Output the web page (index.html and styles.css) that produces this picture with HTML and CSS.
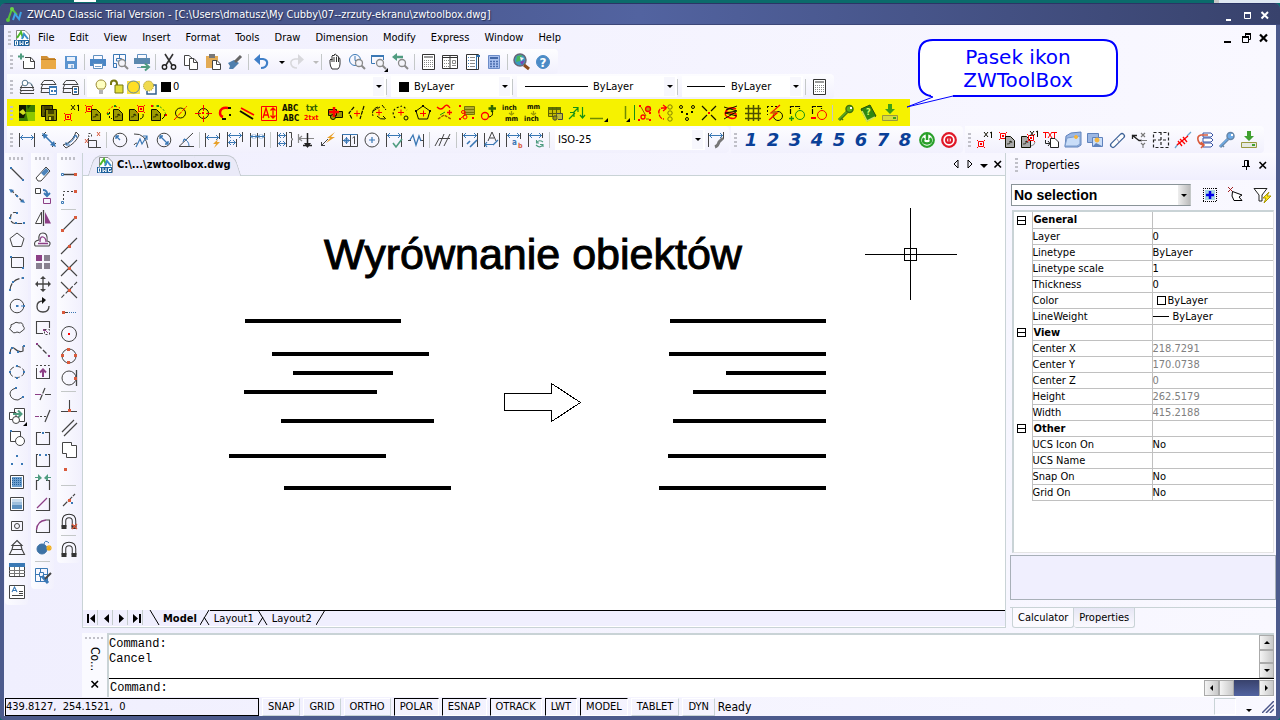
FILE: index.html
```html
<!DOCTYPE html>
<html lang="en">
<head>
<meta charset="utf-8">
<title>ZWCAD Classic</title>
<link rel="stylesheet" href="styles.css">
</head>
<body>
<div class="desktop"><span class="desktop-tab"></span><span class="desktop-edge"></span></div>
<div class="window">
  <header class="titlebar">
    <svg class="logo" viewBox="0 0 18 18" aria-hidden="true"><path d="M3 14L7 3M7 3L12 9" stroke="#58c43c" stroke-width="2" fill="none"/><circle cx="7" cy="3" r="2" fill="#6ad24a"/><circle cx="3" cy="14" r="2" fill="#58c43c"/><path d="M8 14L10 8L14 13L16 6" stroke="#3fa3e8" stroke-width="2" fill="none"/></svg>
    <h1 class="title">ZWCAD Classic Trial Version - [C:\Users\dmatusz\My Cubby\07--zrzuty-ekranu\zwtoolbox.dwg]</h1>
    <div class="tools light" data-tools="wmin wmax wclose"></div>
  </header>

  <nav class="menubar">
    <span class="grip"></span>
    <svg class="doc-icon" viewBox="0 0 16 16" aria-hidden="true"><use href="#dwg"/></svg>
    <button>File</button><button>Edit</button><button>View</button><button>Insert</button><button>Format</button><button>Tools</button><button>Draw</button><button>Dimension</button><button>Modify</button><button>Express</button><button>Window</button><button>Help</button>
    <div class="tools mdi" data-tools="mmin mrest mclose"></div>
  </nav>

  <div class="bar-row">
    <div class="toolbar"><span class="grip"></span><div class="tools" data-tools="new open save | print preview publish | cut copy paste brush | undo ^ redo ^off | pan zoomrt zoomwin zoomprev | props center palette calc | search help"></div></div>
  </div>

  <div class="bar-row">
    <div class="toolbar"><span class="grip"></span><div class="tools" data-tools="layprev laystate layman |"></div>
      <span class="combo layer"><select aria-label="Layer"><option>0</option></select>
        <svg class="mark" viewBox="0 0 80 16" aria-hidden="true"><path d="M5 10C1 5 4 1 8 1S15 5 11 10Z" fill="#ffffc0" stroke="#998830"/><path d="M6 12H10M6 14H10" stroke="#666"/><path d="M18 6V4Q18 1.500 21 1.500T24 5V7" fill="none" stroke="#777711" stroke-width="2"/><path d="M22 6H30V14H22Z" fill="#e3df3c" stroke="#777711"/><path d="M34 2H47V15H34Z" fill="#f7df4a"/><circle cx="40.500" cy="8" r="6" fill="#ffdf25" stroke="#65879a"/><path d="M59 6H63V15H54V12" fill="none" stroke="#315f8f" stroke-width="1.500"/><circle cx="55.500" cy="7" r="5" fill="#f0da50" stroke="#a09024" stroke-dasharray="1 1"/><path d="M68 3H78V13H68Z"/></svg>
        <span class="arrow"></span></span>
      <span class="sep"></span>
      <span class="combo color"><select aria-label="Color"><option>ByLayer</option></select><span class="mark swatch"></span><span class="arrow"></span></span>
      <span class="sep"></span>
      <span class="combo ltype"><select aria-label="Linetype"><option>ByLayer</option></select><span class="mark rule"></span><span class="arrow"></span></span>
      <span class="sep"></span>
      <span class="combo lweight"><select aria-label="Lineweight"><option>ByLayer</option></select><span class="mark rule"></span><span class="arrow"></span></span>
      <div class="tools" data-tools="| props"></div>
    </div>
  </div>

  <div class="bar-row tall">
    <div class="toolbar toolbox"><span class="grip"></span><div class="tools" data-tools="zimg zdisks zx1 zptpage zpagedash zpagept zpagearc zdiam ztarget zarc zpar zfit zabc ztxt zplus zbreak zarcs zdash zpoly zwave ztable zcircle zinch zmm zblock zsort zlineh zlinev zredv zrotate zdots zcross zscrib zgrid zbolt zadd zrem | key book down"></div></div>
    <div class="callout"><svg viewBox="0 0 216 72" aria-hidden="true"><path d="M28 59Q14 56 14 44V16Q14 2 28 2H198Q212 2 212 16V44Q212 58 198 58H48L2 69L28 59Z" fill="#fff" stroke="#00f" stroke-width="1"/><path d="M26 58Q14 56 14 44V16Q14 2 28 2H198Q212 2 212 16V44Q212 58 198 58H48" fill="none" stroke="#00f" stroke-width="2"/></svg><p>Pasek ikon</p><p>ZWToolBox</p></div>
  </div>

  <div class="bar-row tall">
    <div class="toolbar dims"><span class="grip"></span><div class="tools" data-tools="dlin dali darc dord | drad djog ddia dang | dquick dbase dcont | dspace dbreak dlead dtol dcmark dinsp djogl | doblique | dedit dtext dover dupdate |"></div>
      <span class="combo dim"><select aria-label="Dimension style"><option>ISO-25</option></select><span class="arrow"></span></span>
      <div class="tools" data-tools="dstyle"></div></div>
    <div class="toolbar numbers"><span class="grip"></span><div class="tools digits"><button>1</button><button>2</button><button>3</button><button>4</button><button>5</button><button>6</button><button>7</button><button>8</button></div><div class="tools" data-tools="power stop"></div></div>
    <div class="toolbar"><span class="grip"></span><div class="tools" data-tools="x1 ptpage pagept txtpage folder folders clip xy selgrid redline stack bluekey download"></div></div>
  </div>

  <main class="workspace">
    <div class="rails">
      <div class="rail"><span class="grip"></span><div class="tools" data-tools="line xline pline polygon rect arc circle cloud spline ellipse earc insert mkblock points hatch gradient region wipeout table mtext"></div></div>
      <div class="rail"><span class="grip"></span><div class="tools" data-tools="erase copyobj mirror offset array move rotate scale lengthen stretch trim extend breakpt break join chamfer fillet explode | attrib"></div></div>
      <div class="rail"><span class="grip"></span><div class="tools" data-tools="otrack ofrom | oend omid oint oapp oext ocen oquad otan | operp opar oins onode | onear onone | osnap"></div></div>
    </div>

    <div class="content">
      <div class="upper">
        <section class="document">
          <div class="doc-strip">
            <button class="doc-tab"><svg viewBox="0 0 16 16" aria-hidden="true"><use href="#dwg"/></svg><b>C:\...\zwtoolbox.dwg</b></button>
            <div class="tools mini" data-tools="tleft tright tdown tclose"></div>
          </div>
          <div class="sheet">
            <svg class="drawing" role="img" aria-label="Drawing">
              <text x="241" y="93">Wyrównanie obiektów</text>
              <g class="thick"><path d="M162 145H318M189 178H346M210 197H310M161 216H294M198 245H351M146 280H303M201 312H368"/><path d="M587 145H743M586 178H743M643 197H743M610 216H743M590 245H743M585 280H743M576 312H743"/></g>
              <path class="thin" d="M421.500 217.500H468.500V207.500L497.500 226.500L468.500 245.500V234.500H421.500Z"/>
              <path class="thin" d="M782 78.500H874M827.500 32V124M821.500 72.500H833.500V84.500H821.500Z"/>
            </svg>
          </div>
          <div class="sheet-tabs">
            <div class="tools nav" data-tools="sfirst sprev snext slast"></div>
            <svg class="slash wide" viewBox="0 0 12 15" aria-hidden="true"><path d="M2 0L11 15"/></svg>
            <button class="current">Model</button>
            <svg class="slash" viewBox="0 0 10 15" aria-hidden="true"><path d="M0 15L9 0M4 7L9 15"/></svg>
            <button>Layout1</button>
            <svg class="slash over" viewBox="0 0 10 15" aria-hidden="true"><path d="M0 0L9 15M0 15L5 7"/></svg>
            <button>Layout2</button>
            <svg class="slash over" viewBox="0 0 10 15" aria-hidden="true"><path d="M0 15L9 0"/></svg>
            <span class="fill"></span>
          </div>
        </section>

        <aside class="properties">
          <header><span class="grip"></span><h2>Properties</h2><div class="tools mini" data-tools="pin tclose"></div></header>
          <div class="picker">
            <span class="combo"><select aria-label="Selection"><option>No selection</option></select><span class="arrow"></span></span>
            <div class="tools" data-tools="quickadd pick filter"></div>
          </div>
          <div class="grid-box">
            <table>
              <colgroup><col class="c-toggle"><col class="c-name"><col></colgroup>
              <tbody>
              <tr><td><button class="toggle" aria-label="Collapse General"></button></td><th>General</th><td></td></tr>
              <tr><td></td><td>Layer</td><td>0</td></tr>
              <tr><td></td><td>Linetype</td><td>ByLayer</td></tr>
              <tr><td></td><td>Linetype scale</td><td>1</td></tr>
              <tr><td></td><td>Thickness</td><td>0</td></tr>
              <tr><td></td><td>Color</td><td><i class="box"></i>ByLayer</td></tr>
              <tr><td></td><td>LineWeight</td><td><i class="dash"></i>ByLayer</td></tr>
              <tr><td><button class="toggle" aria-label="Collapse View"></button></td><th>View</th><td></td></tr>
              <tr class="dim-row"><td></td><td>Center X</td><td>218.7291</td></tr>
              <tr class="dim-row"><td></td><td>Center Y</td><td>170.0738</td></tr>
              <tr class="dim-row"><td></td><td>Center Z</td><td>0</td></tr>
              <tr class="dim-row"><td></td><td>Height</td><td>262.5179</td></tr>
              <tr class="dim-row"><td></td><td>Width</td><td>415.2188</td></tr>
              <tr><td><button class="toggle" aria-label="Collapse Other"></button></td><th>Other</th><td></td></tr>
              <tr><td></td><td>UCS Icon On</td><td>No</td></tr>
              <tr><td></td><td>UCS Name</td><td></td></tr>
              <tr><td></td><td>Snap On</td><td>No</td></tr>
              <tr><td></td><td>Grid On</td><td>No</td></tr>
              </tbody>
            </table>
          </div>
          <div class="hint"></div>
          <div class="panel-tabs"><button>Calculator</button><button class="current">Properties</button></div>
        </aside>
      </div>

      <section class="command">
        <div class="command-side"><span class="grip"></span><span class="vertical">Co...</span><div class="tools mini" data-tools="tclose"></div></div>
        <div class="command-main">
          <div class="log"><div class="lines"><p>Command:</p><p>Cancel</p></div>
            <div class="vscroll"><button class="up" aria-label="Scroll up"></button><span></span><button class="dn" aria-label="Scroll down"></button></div></div>
          <div class="prompt"><label for="cmd">Command:</label><input id="cmd" type="text">
            <div class="hscroll"><button class="lf" aria-label="Scroll left"></button><span class="thumb"></span><span class="track"></span><button class="rt" aria-label="Scroll right"></button></div></div>
        </div>
      </section>
    </div>
  </main>

  <footer class="status">
    <output>439.8127,&nbsp; 254.1521,&nbsp; 0</output>
    <button>SNAP</button><button>GRID</button><button>ORTHO</button><button class="on">POLAR</button><button class="on">ESNAP</button><button class="on">OTRACK</button><button class="on">LWT</button><button class="on">MODEL</button><button>TABLET</button><button>DYN</button>
    <span class="ready">Ready</span>
    <span class="slot"></span><span class="caret"></span>
    <svg class="sizer" viewBox="0 0 12 12" aria-hidden="true"><path d="M0 12L12 0M4 12L12 4M8 12L12 8" stroke="#4a5588" stroke-width="1.500"/></svg>
  </footer>
</div>

<svg class="defs" aria-hidden="true"><symbol id="dwg" viewBox="0 0 16 16"><path d="M2.500 .5H11L15.500 5V15.500H2.500Z" fill="#fff" stroke="#888"/><path d="M3 8L7 2L9 8" fill="none" stroke="#4cb82c" stroke-width="2"/><path d="M8 9L10 4L14 9" fill="none" stroke="#3a8ecb" stroke-width="2"/><path d="M0 10H15V16H0Z" fill="#1d609c"/><path d="M1.500 11V15H3.500V11ZM6 11V15L7.500 13L9 15V11M14 11.500H11.500V14.500H14V13" fill="none" stroke="#fff"/></symbol></svg>
<script src="icons.js"></script>
</body>
</html>
```
FILE: styles.css
```css
* { box-sizing: border-box; }
body {
  margin: 0;
  min-height: 100vh;
  display: flex;
  flex-direction: column;
  background: #0b6b6b;
  color: #000;
  font: 11px/16px "DejaVu Sans Condensed", "Noto Sans", sans-serif;
}
button, select, input { font: inherit; color: inherit; margin: 0; padding: 0; border: 0; background: none; border-radius: 0; }
h1, h2, p { margin: 0; font: inherit; }
svg { display: block; }
.defs { width: 0; height: 0; position: absolute; }

.desktop { height: 3px; display: flex; padding: 0 0 0 74px; }
.desktop-tab { width: 22px; height: 2px; background: #fff; margin-right: auto; }
.desktop-edge { width: 66px; background: #dfe8f2; border-left: 5px solid #c8c8c8; }

.window {
  flex: 1;
  display: flex;
  flex-direction: column;
  padding: 0 4px 4px 4px;
  border-radius: 6px 6px 4px 4px;
  background: #4c5a8c;
  overflow: hidden;
}
.titlebar {
  display: flex;
  align-items: center;
  height: 22px;
  margin: 0 -4px;
  padding: 2px 6px 0 5px;
  color: #fff;
  background: linear-gradient(90deg, #414c7c, #5263a0 50%, #38426c 100%);
  border-top: 1px solid #2b3565;
  border-bottom: 1px solid #3c4778;
}
.logo { width: 18px; height: 18px; }
.title { flex: 1; padding-left: 4px; white-space: nowrap; text-shadow: 1px 1px 1px #222b50; }

.menubar, .bar-row, .workspace, .status { background: linear-gradient(90deg, #f0effe, #f9f8ff); }
.menubar { display: flex; align-items: center; height: 24px; padding: 1px 0 0 2px; }
.menubar > button { padding: 0 7px 0 8px; }
.doc-icon { width: 16px; height: 16px; }
.menubar .mdi { margin-left: auto; padding-right: 3px; }

.bar-row { display: flex; height: 25px; padding: 0 0 0 3px; position: relative; }
.bar-row.tall { height: 27px; }
.toolbar { display: flex; align-items: center; border-radius: 0 4px 4px 0; background: linear-gradient(#fdfdff, #f1f0fd); padding: 0 4px 0 1px; }
.toolbar + .toolbar { margin-left: 2px; }
.toolbox { background: #f6f200; padding-right: 9px; border-radius: 0; }
.grip { width: 3px; height: 14px; margin: 0 3px 0 2px; flex: none; background: repeating-linear-gradient(#c0c0c8 0 2px, transparent 2px 4px); }
.tools { display: flex; align-items: center; flex: none; }
.tools button { width: 22px; height: 22px; display: grid; place-items: center; flex: none; }
.tools svg { width: 18px; height: 18px; overflow: visible; }
.tools .drop { width: 12px; }
.sep { width: 5px; height: 16px; flex: none; border-left: 1px solid #c4c8c8; border-right: 3px solid transparent; }
.tools .sep { border-left: 2px solid transparent; background: #c4c8c8; background-clip: padding-box; border-right: 2px solid transparent; }
.light button, .mdi button { width: 18px; height: 18px; }
.mini button { width: 14px; height: 18px; }
.mini svg { width: 18px; margin: 0 -2px; }
.dims { padding-right: 2px; }
.numbers { padding-right: 3px; }
.digits button { font: italic bold 18px/22px "DejaVu Sans", sans-serif; color: #0a4098; }

.combo { display: grid; align-items: center; background: #fff; height: 21px; min-width: 0; }
.combo > * { grid-area: 1 / 1; }
.combo select { appearance: none; width: 100%; height: 100%; background: none; outline: 0; }
.combo .arrow { justify-self: end; width: 11px; height: 19px; background: #f7f7fd; display: grid; place-items: center; pointer-events: none; margin-right: 2px; }
.arrow::before, .caret::before { content: ""; border: 3px solid transparent; border-top-color: #000; border-bottom: 0; }
.mark { pointer-events: none; }
.layer { width: 299px; }
.layer select { padding-left: 86px; }
.layer .mark { width: 80px; height: 16px; margin-left: 6px; }
.color { width: 121px; }
.color select { padding-left: 23px; }
.swatch { width: 10px; height: 10px; margin-left: 8px; background: #000; }
.ltype { width: 160px; }
.ltype select { padding-left: 76px; }
.rule { height: 1px; width: 63px; margin-left: 8px; background: #000; }
.lweight { width: 121px; }
.lweight select { padding-left: 49px; }
.lweight .rule { width: 38px; margin-left: 5px; }
.dim { width: 150px; margin-left: 3px; }
.dim select { padding-left: 3px; }

.callout { position: absolute; left: 901px; bottom: 16px; width: 216px; height: 72px; color: #00f; }
.callout svg { position: absolute; width: 216px; height: 72px; }
.callout p { position: relative; padding-left: 10px; text-align: center; font: 20px/23px "DejaVu Sans", sans-serif; }
.callout p:first-of-type { margin-top: 8px; }

.workspace { flex: 1; display: flex; }
.rails { width: 78px; flex: none; display: flex; align-items: flex-start; gap: 3px; padding-left: 1px; }
.rail { padding: 2px 0; background: linear-gradient(90deg, #fcfcff, #f2f1fd); border-radius: 0 0 4px 4px; }
.rail .grip { display: block; width: 14px; height: 3px; margin: 2px 4px 3px; background: repeating-linear-gradient(90deg, #c0c0c8 0 2px, transparent 2px 4px); }
.rail .tools { flex-direction: column; }
.rail .tools button { width: 23px; }
.rail .sep { width: 15px; height: 6px; border: 0; border-top: 2px solid transparent; border-bottom: 3px solid transparent; }

.content { flex: 1; min-width: 0; display: flex; flex-direction: column; }
.upper { flex: 1; display: flex; gap: 4px; }
.document { flex: 1; min-width: 0; display: flex; flex-direction: column; border: 1px solid #c9d3d6; border-top: 0; }
.doc-strip { display: flex; align-items: flex-end; height: 23px; border-bottom: 1px solid #c9d3d6; }
.doc-tab { position: relative; z-index: 0; display: flex; gap: 4px; align-items: center; height: 20px; margin-left: 8px; padding: 0 7px 0 6px; white-space: nowrap; }
.doc-tab::before, .doc-tab::after { content: ""; position: absolute; z-index: -1; top: 0; bottom: -1px; border: 1px solid #c0c6cc; border-bottom: 0; background: #eaeaf8; }
.doc-tab::before { left: 0; right: 30px; border-right: 0; border-radius: 8px 0 0 0; transform: skewX(-18deg); }
.doc-tab::after { right: 0; width: 40px; border-left: 0; border-radius: 0 8px 0 0; transform: skewX(18deg); }
.doc-tab svg { width: 16px; height: 16px; }
.doc-strip .mini { margin-left: auto; align-self: center; }
.sheet { flex: 1; background: #fff; display: flex; }
.drawing { width: 100%; flex: 1; min-height: 380px; shape-rendering: crispEdges; }
.drawing text { font: 43px "Liberation Sans", sans-serif; stroke: #000; stroke-width: 1px; }
.thick { stroke: #000; stroke-width: 4px; stroke-linecap: butt; }
.thin { fill: none; stroke: #000; }
.sheet-tabs { display: flex; height: 17px; align-items: flex-start; border-bottom: 1px solid #fff; background: #f0effe; }
.sheet-tabs > button, .fill { height: 16px; line-height: 16px; border-top: 1px solid #000; padding: 0 4px; }
.sheet-tabs > .current { border-top: 0; font-weight: bold; padding: 1px 3px 0; }
.fill { flex: 1; }
.nav button { width: 15px; height: 15px; border-right: 1px solid #c4cccc; }
.slash { width: 10px; height: 15px; fill: none; stroke: #000; flex: none; }
.slash.over { box-shadow: inset 0 1px #000; }
.slash.wide { width: 12px; margin-left: 5px; }

.properties { width: 266px; flex: none; display: flex; flex-direction: column; }
.properties header { display: flex; align-items: center; height: 27px; padding: 0 0 3px 3px; background: linear-gradient(#fbfaff, #f0effe); }
.properties h2 { flex: 1; padding-left: 4px; font-size: 12px; }
.properties header .mini { padding-right: 6px; gap: 2px; }
.picker { display: flex; height: 30px; align-items: center; justify-content: space-between; padding: 0 3px 0 1px; }
.picker .combo { width: 180px; height: 22px; border: 1px solid #8a9498; border-right-color: #c4c8c8; }
.picker select { padding-left: 2px; font: bold 14px/16px "Liberation Sans", sans-serif; }
.picker .arrow { width: 12px; height: 100%; margin: 0; background: linear-gradient(90deg, #eee, #bbb); }
.picker .tools { gap: 4px; }
.grid-box { flex: 1; margin: 0 2px 0 2px; background: #fff; border: 2px solid #c9d3d6; border-right: 1px solid #e4e4e4; border-bottom: 1px solid #e4e4e4; }
table { width: 100%; border-collapse: collapse; table-layout: fixed; }
.c-toggle { width: 18px; }
.c-name { width: 120px; }
td, th { height: 16px; padding: 0; line-height: 15px; text-align: left; white-space: nowrap; border: 1px solid #c0c0c0; border-right: 0; border-top: 0; }
td:first-child { border: 0; }
th { padding-left: 1px; }
.dim-row td:last-child { color: #808080; }
.toggle { display: block; width: 9px; height: 9px; margin-left: 3px; border: 1px solid #000; background: linear-gradient(#000, #000) center / 9px 1px no-repeat; }
.box { display: inline-block; width: 9px; height: 9px; margin: 0 2px 0 4px; border: 1px solid #000; vertical-align: -1px; }
.dash { display: inline-block; width: 16px; height: 1px; margin-right: 4px; background: #000; vertical-align: 3px; }
.hint { height: 45px; margin-top: 2px; border: 1px solid #a8b0b8; background: #f0effe; }
.panel-tabs { display: flex; height: 21px; margin-top: 7px; padding-left: 2px; align-items: flex-start; border-top: 1px solid #c9d3d6; }
.panel-tabs button { height: 20px; padding: 0 5px; border: 1px solid #c9d3d6; border-top: 0; background: #fbfaff; border-radius: 0 0 3px 3px; }
.panel-tabs button + button { border-left: 0; }
.panel-tabs .current { background: linear-gradient(#e6e6f4, #fbfaff); }

.command { display: flex; height: 64px; margin-top: 5px; }
.command-side { width: 25px; flex: none; display: flex; flex-direction: column; align-items: center; background: #fafaff; }
.command-side .grip { width: 19px; height: 2px; margin: 4px 0 8px; background: repeating-linear-gradient(90deg, #c0c0c8 0 2px, transparent 2px 4px); }
.vertical { writing-mode: vertical-rl; height: 28px; font-size: 12px; }
.command-main { flex: 1; min-width: 0; display: flex; flex-direction: column; margin-right: 2px; border-left: 2px solid #c9d3d6; border-top: 2px solid #c9d3d6; background: #fff; font: 12px/15px "Liberation Mono", monospace; }
.log { display: flex; flex: 1; border-bottom: 1px solid #000; }
.lines { flex: 1; padding-top: 2px; }
.vscroll { width: 15px; display: flex; flex-direction: column; background: #eee; }
.vscroll > *, .hscroll > * { border: 1px solid #aaa; background: linear-gradient(90deg, #f4f4f4, #c8c8c8); display: grid; place-items: center; }
.vscroll > button { height: 15px; }
.vscroll > span { flex: 1; }
.prompt { display: flex; height: 18px; align-items: center; }
.prompt input { flex: 1; min-width: 0; height: 15px; outline: 0; }
.prompt label { padding-left: 1px; }
.hscroll { display: flex; height: 16px; }
.hscroll > * { width: 15px; }
.hscroll .track { width: 25px; border: 0; background: linear-gradient(#38426c, #5263a0); }
.up::before, .dn::before, .lf::before, .rt::before { content: ""; border: 3px solid transparent; }
.up::before { border-bottom-color: #000; border-top: 0; }
.dn::before { border-top-color: #000; border-bottom: 0; }
.lf::before { border-right-color: #000; border-left: 0; }
.rt::before { border-left-color: #000; border-right: 0; }

.status { display: flex; align-items: center; height: 19px; gap: 3px; padding: 0 2px 0 1px; }
.status output { width: 254px; height: 18px; border: 1px solid #000; white-space: nowrap; }
.status button { height: 18px; padding: 0 5px; border: 1px solid #fff; border-right-color: #c9d3d6; border-bottom-color: #c9d3d6; }
.status .on { border-color: #000 #fff #fff #000; }
.ready { font-size: 12px; }
.slot { width: 22px; height: 17px; margin-left: auto; border: 1px solid #c9d3d6; border-right-color: #fff; border-bottom-color: #fff; }
.caret { width: 20px; display: grid; place-items: center; padding-top: 8px; }
.sizer { width: 12px; height: 12px; }
```
FILE: icons.js
```js
const K = '#444', B = '#3a78b5', R = '#ff0000', O = '#d95b3c', G = '#4f9c80', P = '#8c3f86', D = '#101000', L = '#159015', OL = '#9c9a00', GY = '#8a8a8a';
const s = (c, d, w = 1, x = '') => `<path fill="none" stroke="${c}" stroke-width="${w}" d="${d}" ${x}/>`;
const f = (c, d, st = 'none') => `<path fill="${c}" stroke="${st}" d="${d}"/>`;
const o = (c, x, y, r, fill = 'none', w = 1) => `<circle cx="${x}" cy="${y}" r="${r}" fill="${fill}" stroke="${c}" stroke-width="${w}"/>`;
const q = (c, ...p) => { const n = c === O ? 3 : 2; let d = ''; for (let i = 0; i < p.length; i += 2) d += `M${p[i] - 1} ${p[i + 1] - 1}h${n}v${n}h-${n}z`; return f(c, d); };
const t = (c, x, y, v, z = 7) => `<text x="${x}" y="${y}" fill="${c}" font-size="${z}" font-weight="bold" font-family="DejaVu Sans Condensed, sans-serif">${v}</text>`;
const dash = 'stroke-dasharray="2 2"';
const lens = (x, y, c = GY) => o(c, x, y, 3.5, '#f4f4fa', 1.3) + s(c, `M${x + 2.5} ${y + 2.5}L${x + 6} ${y + 6}`, 2);
const pt = (x, y) => f('none', `M${x + .5} ${y + .5}h5v5h-5z`, R) + q(R, x + 3, y + 3) + s(R, `M${x - 1} ${y - 1}l1 1M${x + 7} ${y - 1}l-1 1M${x - 1} ${y + 7}l1-1M${x + 7} ${y + 7}l-1-1`);
const page = (x, y, c) => f(c, `M${x + .5} ${y + .5}h5l4 4v7h-9z`, D) + s(D, `M${x + 2} ${y + 8}q3 1 4-3M${x + 4} ${y + 6}l2-1l1 2`, .7);
const x1 = (x, y, c = D) => s(c, `M${x} ${y}l4 5m0-5l-4 5M${x + 6} ${y + 1}l1.500-1v6`);
const dimv = 'M1.500 2V16M16.500 2V16';
const da = (y = 6, a = 2, b = 16) => s(B, `M${a} ${y + .5}H${b}M${a + 3} ${y - 2}L${a + .5} ${y + .5}L${a + 3} ${y + 3}M${b - 3} ${y - 2}L${b - .5} ${y + .5}L${b - 3} ${y + 3}`);
const sheet = (c = K) => f('#fff', 'M3.500 1.500H15.500V16.500H3.500Z', c);
const mag = s('#333', 'M4 14V8Q4 3 9 3T14 8V14', 4.5) + s('#f7f7ff', 'M4 12V8Q4 3 9 3T14 8V12', 2.5) + f('#333', 'M1.500 12h5v4h-5zM11.500 12h5v4h-5z');
const floppy = (x, y, c) => f(c, `M${x + .5} ${y + .5}h11v11h-11z`, D) + f('#444400', `M${x + 3} ${y + 1}h6v4h-6zM${x + 3} ${y + 7}h6v4h-6z`) + f('#e0de30', `M${x + 4} ${y + 8}h2v3h-2z`);
const key = (c, d) => s(d, 'M2 16L10 8', 3) + s(c, 'M2 15.500L10 7.500', 1.5) + o(d, 12.5, 5, 3.5, c, 1.5) + f('#fff', 'M13 3h2v2h-2z') + s(d, 'M4 14l2 2', 1.5);
const dl = (c, tray) => f(c, 'M7 0h4v5h3l-5 5l-5-5h3z') + f(tray, 'M1.500 11.500h15v5h-15z', '#999940') + f(c, 'M12 13h3v2h-3z');

const icons = {
  wmin: f('#fff', 'M6 13h5v2h-5z'), wmax: s('#fff', 'M6 6.500H12.500V12.500H6.500V6', 1) + s('#fff', 'M6 7H13', 2), wclose: s('#fff', 'M5.500 6L12 12.500M12 6L5.500 12.500', 2),
  mmin: f('#000', 'M5 12h7v2H5z'), mrest: s('#000', 'M8.500 7V5.500H13.500V10.500H12M5.500 8.500H11.500V13.500H5.500Z') + s('#000', 'M8 5H14M5 8H12', 2), mclose: s('#000', 'M5 5.500L12 12.500M12 5.500L5 12.500', 2.2),
  new: f('#fff', 'M7 4.500H13L16.500 8.500V15.500H5.500V8', K) + s(K, 'M12.500 4.500V8.500H17') + s(G, 'M0 3.500H6M3 .5V6.500', 2),
  open: f('#d08f34', 'M1 3H7L9 5H15V8H1Z') + f('#eaa944', 'M1 7H16V16H1Z') + s('#b87820', 'M1 6.500H16'),
  save: f('#5b94d0', 'M3 3H15V16H3Z') + f('#e9f0fa', 'M5 4H13V8H5ZM6 11H12V15H6Z') + f('#9bb9dd', 'M9 12h2v3h-2z'),
  print: s('#6090c0', 'M4.500 6V2.500H13.500V6') + f('#4a86c5', 'M1 6H17V13H1Z') + f('#fff', 'M4.500 10.500H13.500V15.500H4.500Z', '#6090c0') + s('#7aa0c8', 'M6 13.500h6'),
  preview: s(B, 'M2.500 1.500H14.500V9M2.500 1.500V14.500H6M5.500 5.500H10.500V8H5.500ZM2 10.500H5.500V15M8.500 2V5') + lens(11, 10),
  publish: s('#6090c0', 'M4.500 5V1.500H13.500V5') + f('#5b88ae', 'M1 5H17V11H1Z') + s('#7aa0c8', 'M4 14.500H9') + s(G, 'M8 14H16M12 10.500L16 14L12 17.500', 2),
  cut: s('#333', 'M5 1L12 12M13 1L6 12', 1.6) + o('#222', 4.500, 14, 2.2, 'none', 1.4) + o('#222', 13.500, 14, 2.2, 'none', 1.4),
  copy: f('#fff', 'M2.500 2.500H7L10.500 5.500V12.500H2.500Z', K) + f('#fff', 'M7.500 5.500H12L15.500 9.500V16.500H7.500Z', K) + s(K, 'M11.500 6V9.500H16'),
  paste: f('#e3ab55', 'M2 3H14V15H2Z') + f('#777', 'M5 1h6v4H5z') + f('#fff', 'M8.500 7.500H13L16.500 11V16.500H8.500Z', K) + s(K, 'M12.500 8V11.500H16'),
  brush: f('#4f7fae', 'M2 10L8 7L13 10L7 16H3L4 13Z') + s('#666', 'M9 9L15 3', 3),
  undo: s('#3f7fc8', 'M3 6H10Q15 7 14 11T8 15', 2.2) + f('#3f7fc8', 'M1 6.500L7 1V12Z'),
  redo: s('#d8d8dc', 'M15 6H8Q3 7 4 11T10 15', 1.6) + f('#d8d8dc', 'M17 6.500L11 1V12Z'),
  '^': f('#000', 'M6 8h6l-3 3z'), '^off': f('#bbb', 'M6 8h6l-3 3z'),
  pan: f('#fff', 'M6 16Q4 13 4 10V7Q5 5 6 7V3Q7 1 8 3V2Q9 0 10.500 2V3Q12 2 12.500 4V5Q14 4 14 7V11Q14 14 12 16Z', '#333') + s('#333', 'M6 6V9M8 4V9M10.500 4V9M12.500 5V9'),
  zoomrt: o(B, 7, 7, 5.500) + s(B, 'M7 3V7.500H10') + lens(11, 10),
  zoomwin: s(B, 'M1.500 3V10.500H5M13.500 3V7', 1) + s(B, 'M1 3H14', 2) + lens(10, 10) + f('#000', 'M18 15V19H14Z'),
  zoomprev: s(G, 'M3 4H11', 2.5) + f(G, 'M0 4L5 0V8Z') + lens(10, 10),
  props: sheet('#333') + s('#999', 'M5 4H14', 2) + s('#888', 'M5 7.500H14M5 9.500H14M5 11.500H14M5 13.500H14', 1, 'stroke-dasharray="1 1"'),
  center: f('#fff', 'M1.500 2.500H16.500V15.500H1.500Z', '#333') + s('#333', 'M9 2V15M1 4.500H16') + s('#888', 'M3 7.500H8M3 10.500H8M3 13.500H8', 1, 'stroke-dasharray="1 1"') + s(GY, 'M11.500 7.500H14.500V10.500H11.500ZM11 12.500H15'),
  palette: sheet('#333') + f('#2f6ca6', 'M13 2H17V4H14V16H13Z') + s(B, 'M5 4.500H6M5 7.500H6M5 10.500H6M5 13.500H6') + s(GY, 'M7 4.500H12M7 7.500H12M7 10.500H12M7 13.500H12'),
  calc: f('#a9c0ef', 'M3.500 2.500H14.500V15.500H3.500Z', '#6c8cc8') + f('#4468a8', 'M5 4H13V6H5Z') + s('#4a6cae', 'M5 8.500H13M5 11H13M5 13.500H13', 1.5, 'stroke-dasharray="2 1"'),
  search: o('#667', 8, 7, 6, '#3a9ac0', 1.500) + f('#48b55c', 'M5 3L10 2L8 8L4 9Z') + f('#f4f4f4', 'M8 4L12 5L9 8Z') + f('#8040b0', 'M8 9L13 7L10 12Z') + s('#8b4b1c', 'M12 12L17 16', 3),
  help: o('#4c8bc6', 9, 9, 6.500, '#4c8bc6') + `<text x="9" y="13.500" text-anchor="middle" font-size="12" font-weight="bold" fill="#fff" font-family="DejaVu Sans">?</text>`,
  layprev: s(K, 'M2 9.500H16M3 9L5 6M15 9L13 6M2 12.500H16M2 15.500H16M2 12L4 9M16 12L14 9M2 15L4 12') + o('#56788f', 7, 5, 2.8, '#fff') + s('#56788f', 'M9 5Q14 4 14 8'),
  laystate: s(K, 'M4 2.500H13L16 6.500H1L4 2.500M3 6L1 10.500H10M2 10L1 14.500H9') + f('#fff', 'M9.500 8.500H16.500V16.500H9.500Z', B) + s(B, 'M9 9H17', 2) + q(B, 12, 13, 15, 13),
  layman: s(K, 'M4 2.500H13L16 6.500H1L4 2.500M3 6L1 10.500H10M2 10L1 14.500H9') + f('#fff', 'M10.500 8.500H16.500V16.500H10.500Z', K) + f(B, 'M12 10h3v2h-3zM12 13h3v2h-3z'),

  zimg: f('#3c7c00', 'M1 1H17V17H1Z') + f('#8cc800', 'M8 8H17V17H10Z') + f('#101800', 'M1 1H8V8L6 14H1Z') + f('#d0e020', 'M1 8L5 5L8 9L5 11Z') + f('#144400', 'M9 1H13L10 5Z'),
  zdisks: floppy(1, 1, '#5c5a00') + floppy(5, 5, '#8b8900'),
  zx1: x1(9, 1) + pt(3, 10), x1: x1(8, 1) + pt(2, 10),
  zptpage: pt(2, 2) + page(7, 5, OL), ptpage: pt(2, 2) + page(7, 5, '#aaa'),
  zpagedash: s(R, 'M1 10Q3 3 9 2L14 4', 1, dash) + q(L, 2, 10, 9, 2) + page(7, 5, OL) + s(D, 'M3.500 8V14.500H6', 1, dash),
  zpagept: page(1, 5, OL) + pt(10, 2) + s(D, 'M12 15Q16 14 15 10'), pagept: page(1, 5, '#aaa') + pt(8, 4) + x1(10, 0) + s(GY, 'M11 15Q15 14 15 11'),
  zpagearc: page(1, 5, OL) + s(L, 'M2 2H8Q14 4 16 11', 1, dash) + q(L, 8, 2) + q(R, 16, 11, 2, 2) + s(D, 'M12 15Q15 13 15 10'),
  zdiam: o(D, 8.500, 9, 5) + s(R, 'M2 16L15 2', 1, 'stroke-dasharray="5 1"'), ztarget: o(D, 9.500, 9.500, 5) + s(R, 'M9.500 1V7M9.500 12V18M1 9.500H7M12 9.500H18') + q(R, 9, 9),
  zarc: s(R, 'M12 4Q4 3 4 9Q4 12 7 13', 2.5) + q(D, 13, 4, 14, 4, 7, 15, 14, 11, 9, 15),
  zpar: s(R, 'M3 4L16 11', 1.6) + s(D, 'M2 7L15 15', 2),
  zfit: f('none', 'M1.500 2.500H16.500V16.500H1.500Z', R) + s(R, 'M3 14L6 4L9 14M4 11H8M13 4V14M10.500 6.500L13 4L15.500 6.500M10.500 11.500L13 14L15.500 11.500', 1.3),
  zabc: t(D, 0, 7, 'ABC', 8) + t(D, 1, 17, 'ABC', 8), ztxt: t('#2f5c00', 2, 7, 'txt', 8) + t(R, 0, 16, '2txt', 7),
  zplus: f(OL, 'M2.500 5.500H10.500V11.500H2.500ZM8.500 7.500H16.500V13.500H8.500Z', D) + o(D, 7, 13, 2.500, OL) + s(R, 'M8 3V13M3 8H13', 2.500),
  zbreak: s(D, 'M6 3L1 9L4 15M16 2L12 15', 1.2, 'stroke-dasharray="4 1"') + s(R, 'M6 9.500H12M9 6.500V12.500'),
  zarcs: s(D, 'M8 3Q1 5 3 12M3 7L10 3M12 1L16 6M13 12L16 15', 1, 'stroke-dasharray="4 1"') + s(R, 'M6 8.500H12M9 5.500V11.500') + s(D, 'M7 12Q10 16 15 15'),
  zdash: s(D, 'M3 14Q-1 8 4 4L10 2M12 3L15 6', 1.2, dash) + s(R, 'M6 8.500H12M9 5.500V11.500') + o(D, 14, 14, 2),
  zpoly: f('none', 'M9 2L16 7L13.500 15H4.500L2 7Z', D) + s(R, 'M6 9.500H12M9.500 6.500V12.500') + q(D, 9, 2, 16, 7, 2, 7),
  zwave: s(R, 'M1 3Q5 7 8 3T14 4M11 8.500H16M13.500 6V11', 1.3) + s('#a05000', 'M2 15L8 11L15 15', 1.3, 'stroke-dasharray="3 1"') + s(L, 'M4 11L9 8'),
  ztable: f('#b0a830', 'M6.500 2.500H16.500V10.500H6.500Z', '#777700') + s('#777700', 'M6 5.500H16M6 8.500H16') + o(R, 5, 8, 1.500) + q(R, 2, 2, 2, 15, 15, 14) + s(R, 'M3 14L7 11V7') + o(R, 7, 13, 2),
  zcircle: o(R, 5, 12, 3.500, 'none', 1.3) + s('#2f6800', 'M12 1V8M8.500 4.500H16', 2.5) + s(D, 'M9 13Q14 12 12 7'),
  zinch: t(D, 0, 6, 'inch', 7) + s(OL, 'M9.500 7V11M7 9L9.500 11L12 9', 1.3) + t(D, 3, 17, 'mm', 7),
  zmm: t(D, 3, 5, 'mm', 7) + s(OL, 'M9.500 7V11M7 9L9.500 11L12 9', 1.3) + t(D, 0, 17, 'inch', 7),
  zblock: f('#c8c000', 'M2.500 3.500H14.500V12.500H2.500Z', '#5c6000') + f('#5c7000', 'M2 3H15V6H2Z') + s('#5c6000', 'M6.500 3V12M10.500 3V12M2 9.500H14') + o('#444', 9, 14, 2.200, OL) + f('#bdb93c', 'M10.500 9.500H16.500V15.500H12', '#444'),
  zsort: s(L, 'M1 15L7 9M6 13V8.500H2M5 9L10 4M5 3.500H10V8M14.500 3V14M12 11L14.500 14L17 11', 1.2),
  zlineh: s('#6f8c00', 'M0 14.500H13', 1.5) + f('#000', 'M18 14V18H14Z'), zlinev: s('#6f8c00', 'M13.500 2V15', 1.5) + f('#000', 'M18 14V18H14Z'),
  zredv: s(L, 'M.5 1V16') + o(R, 14, 5, 2.500, '#c0a000', 1.3) + o(R, 9, 13, 2, 'none', 1.3) + s('#a05000', 'M7 3L12 12M15 15H12') + q(R, 6, 2, 16, 9, 5, 16, 16, 16),
  zrotate: s(R, 'M10 4H6Q2 5 3 10T8 15M7 1L11 4L7 7', 1.3, 'stroke-dasharray="5 1"') + o('#808000', 14, 3, 2.200) + o('#808000', 14, 9, 2.200) + o('#808000', 14, 15, 2.200),
  zdots: o(D, 3, 3, 1.500) + o(D, 15, 3, 1.500) + o(D, 9, 15, 1.500) + q(D, 4, 8, 14, 8, 9, 10),
  zcross: s(D, 'M2 2L7 7M11 11L16 16M16 2L11 7M7 11L2 16', 1.2) + q(R, 9, 9),
  zscrib: s(R, 'M14 5Q7 2 4 7T8 14T14 10L4 8', 1.5) + s(D, 'M2 3L15 7L3 9L15 12M2 15L14 8M15 2L4 6', 1),
  zgrid: s('#4d5000', 'M4.500 1V17M9.500 1V17M14.500 1V17M1 4.500H17M1 9.500H17M1 14.500H17', 1.5),
  zbolt: s(D, 'M1 2.500H12M1.500 2V11', 1, dash) + o(D, 12, 12, 4.500) + s(R, 'M14 1L5 9H11L3 16', 1.2) + f('#c07000', 'M12 2L8 7H12L5 13L8 9H5Z'),
  zadd: s(D, 'M2.500 10V2.500H11.500V5', 1.2, 'stroke-dasharray="5 1"') + o(L, 12, 11, 4.500) + s(L, 'M1 14.500H6M3.500 12V17', 1.3),
  zrem: s(D, 'M2.500 10V2.500H11.500V5', 1.2, 'stroke-dasharray="5 1"') + o(R, 12, 11, 4.500) + s(R, 'M1 14H6', 2),
  key: key('#5aac20', '#3f6f10'), bluekey: key('#6cabe8', '#6686a8'),
  book: f('#2f8610', 'M2 5L11 1L17 12L8 17Z', '#285008') + s('#cde060', 'M3 7L8 17L16 13', 1.5) + t('#d8ff60', 7, 11, '?', 9),
  down: dl('#40a018', '#d7db40'), download: dl('#40a030', '#e5e8e2'),

  dlin: s(K, dimv) + da(), dali: s(K, 'M2 5L6 1M12 16L16 12') + s(B, 'M4 4L14 14', 1.6) + f(B, 'M2 2L8 4L4 8ZM16 16L10 14L14 10Z'),
  darc: s(K, 'M1 14L4 17Q14 12 17 4L14 1Q11 11 1 14') + s(B, 'M4 14Q12 10 14 4M4 11V14H8M11 6L14 4L15 7'),
  dord: s(K, 'M4.500 7V16.500H17M4.500 9.500H12.500V16', 1) + s(O, 'M1 8L4 12M4 8L1 12M13 1L16 5M16 1L13 5') + s(K, 'M4.500 2.500H7.500V5.500H4.500Z', 1, dash),
  drad: o(K, 9, 9, 6.800) + s(B, 'M9 9L5 5M5 8V5H8', 1.3), djog: s(K, 'M1 3Q13 2 15 17M1 14Q2 12 4 12') + s(B, 'M3 16L7 8L9 13L14 5M10 5H14V9', 1.2),
  ddia: o(K, 9, 9, 6.800) + s(B, 'M5 5L13 13M5 8V5H8M10 13H13V10', 1.3), dang: s(K, 'M16 2L2 15.500H17') + s(B, 'M7 8Q12 10 12 15M6 11L7 8L10 9'),
  dquick: s(K, 'M1.500 2V16M15.500 2V8') + da(6, 2, 15) + f('#e8a028', 'M14 8L9 13H12L10 17L16 11H13Z'),
  dbase: s(K, 'M1.500 1V16M10.500 8V16M16.500 1V11') + da(4) + da(11, 2, 10), dcont: s(K, 'M2.500 2V16M9.500 2V16M16.500 2V16') + s(B, 'M2 5.500H17M5 3.500L3 5.500L5 7.500M7 3.500L9 5.500L7 7.500M12 3.500L10 5.500L12 7.500M14 3.500L16 5.500L14 7.500'),
  dspace: s(K, 'M2.500 1V16M11.500 1V16M14 1.500H16.500V7L17.500 8L16.500 10V15.500H14') + da(4, 3, 11) + da(12, 3, 11),
  dbreak: s(GY, 'M1 7.500H17M1.500 3V12M5 5L2 7.500L5 10', 1.2) + s('#222', 'M10.500 2V16M6 14.500H15', 1.5) + f('#222', 'M10.500 17L7 12H14Z'),
  dlead: s(K, 'M2 15L9 8M2.500 11V14.500H6') + f('#e8a028', 'M16 1L8 7H11L7 12L16 6H12Z'),
  dtol: s(K, 'M1.500 3.500H16.500V15.500H1.500ZM9.500 3V15') + s(K, 'M11.500 7L13.500 5.500V13') + o(B, 5.500, 9.500, 2) + s(B, 'M5.500 6V13M2 9.500H9M1 3.500H16'),
  dcmark: o(K, 9, 9, 7) + s(B, 'M9 6V12M6 9H12', 1.2), dinsp: s(K, dimv) + da(4) + s(G, 'M8 12L11 16L17 8', 1.6), djogl: s(K, 'M1 9.500H4M16.500 3V16M13 9.500H17') + s(B, 'M3 9L6 4L9 14L12 5L14 10', 1.3),
  doblique: s(K, 'M1 15L5 7.500H16M5 15L10 3M10 15L16 3'), dedit: s(K, dimv) + da(4) + s(B, 'M9 16L16 9M6 13L9 10', 1.6), dtext: s(K, 'M1.500 2V16M16.500 2V16M5 10L9 1L13 10M7 7H11') + s(B, 'M2 13.500H10M4 11L2 13.500L4 16M10 14L15 9', 1.2),
  dover: s(K, 'M1.500 2V16M15.500 2V8') + da(4, 2, 15) + t(B, 7, 14, 'a', 8) + t(O, 13, 17, 'b', 7), dupdate: s(K, 'M1.500 2V16M15.500 2V7') + da(4, 2, 15) + s(G, 'M16 11Q12 8 9.500 12M9.500 9V12H12M9 14Q13 18 16 13.500M16 16V13.500H13', 1.1),
  dstyle: s(K, 'M1.500 2V16M16.500 1V8') + da(4, 2, 16) + s('#777', 'M8 16Q11 15 12 11L16 7', 3),
  power: o('#2aa02a', 9, 9, 6.800, '#fff', 2.200) + s('#2aa02a', 'M6 7Q3 12 9 12.500Q15 12 12 7', 2.500) + s('#2aa02a', 'M9 3V9', 2.500), stop: o('#e01828', 9, 9, 6.800, '#fff', 2.200) + o('#e01828', 9, 9, 3, '#fff', 2) + s('#e01828', 'M9 7V11', 1.500),
  txtpage: s(R, 'M1 1.500H6M3.500 1V7M6 1L10 7M10 1L6 7M10 1.500H15M12.500 1V7') + f('#fff', 'M8.500 7.500H13L16.500 11V16.500H8.500Z', '#222') + s('#222', 'M3.500 9V12.500H8M6 10L8 12.500L6 15'),
  folder: f('#9cb7e3', 'M2 5L7 2L17 1V14L14 16H1Z', '#5f82bc') + f('#c9ddf8', 'M3 7L16 5V13L13 15L1 15Z', '#7a9bcc') + o('#f5b43a', 12, 6, 1.500, '#f5b43a'),
  folders: f('#9cb7e3', 'M1.500 2.500H12.500V11.500H1.500Z', '#5f82bc') + f('#c9ddf8', 'M6.500 6.500H16.500V15.500H6.500Z', '#5f82bc') + o('#f5b43a', 11, 9, 2, '#f5b43a') + f('#5f82bc', 'M7 15L10 12L16 15Z'),
  clip: s('#3d6297', 'M5 14L14 5', 6, 'stroke-linecap="round"') + s('#fff', 'M5 14L14 5', 3.5, 'stroke-linecap="round"') + s('#99b', 'M9 8L11 11'),
  xy: s('#222', 'M2 4L9 9.500H12M2.500 8V4.500H7', 1.3) + s('#777', 'M11 2L15 6M15 2L11 6M11 9.500H17M11 12L13 14L15 12M13 14V17', 1.1),
  selgrid: s('#222', 'M1.500 1.500H16.500V16.500H1.500ZM9 1V17M1 9H17', 1.2, 'stroke-dasharray="3 2"'),
  redline: s('#6aa6cf', 'M1 17L4 13M13 5L17 1', 1.3) + s(R, 'M4 10L8 15M6 8L11 13M9 6L13 11M3 14L14 5', 1.3),
  stack: f('#fff', 'M7 2H15L17 4L15 6H7ZM7 7H15L17 9L15 11H7ZM7 12H15L17 14L15 16H7Z', '#3954a5') + s(O, 'M12 4H5Q1 5 2 9T7 14M5 11L8 14L5 17', 1.6),

  line: s(K, 'M3 3L15 15', 1.2) + q(B, 3, 3, 15, 15), xline: s(K, 'M3 3L15 15', 1.3, 'stroke-dasharray="4 2"') + f(B, 'M1 2l5 1l-3 3zM17 16l-5-1l3-3z') + q(B, 9, 9),
  pline: s(K, 'M10 3.500H6Q2.500 4 2.500 9T7 14.500H16', 1.2, 'stroke-dasharray="5 2"') + q(B, 9, 4, 2, 9, 8, 14, 16, 14), polygon: f('#f8f8ff', 'M9 2L16 7.500L13.500 15.500H4.500L2 7.500Z', K),
  rect: s(K, 'M3.500 4.500H15.500V14.500H3.500Z') + q(B, 3, 4, 15, 15), arc: s(K, 'M2 15Q3 4 15 3', 1.2, 'stroke-dasharray="7 2"') + q(B, 2, 15, 5, 7, 15, 3),
  circle: o(K, 9, 9, 6.800) + s(B, 'M9 9H15', 1, dash) + q(B, 9, 9, 16, 9), cloud: f('#f8f8ff', 'M5 5Q8 2 11 4Q15 3 15 7Q18 10 14 12Q12 15 9 13Q5 15 4 12Q0 10 3 8Q2 5 5 5', K),
  spline: s(K, 'M2 12Q3 4 7 8T15 10V5', 1.2) + q(B, 2, 12, 4, 7, 10, 11, 16, 5), ellipse: `<ellipse cx="9" cy="9" rx="7" ry="5.500" fill="none" stroke="${K}" stroke-dasharray="5 2"/>` + q(B, 9, 3, 9, 15, 2, 9, 16, 9),
  earc: s(K, 'M9 3Q2 4 2 9Q3 15 10 15L15 12') + q(B, 8, 3, 15, 12), insert: f('#fff', 'M6.500 1.500H16.500V14.500H6.500Z', K) + f('#fff', 'M1.500 5.500H8V12.500H1.500Z', K) + s(G, 'M5 7H13M10 3.500L13.500 7L10 10.500', 2) + o(K, 8, 13, 3.500, '#fff') + f('#000', 'M19 15V19H15Z'),
  mkblock: f('#fff', 'M2.500 2.500H12.500V12.500H2.500Z', K) + o(K, 12, 12, 4.500, '#fff') + q(B, 3, 2), points: q(B, 9, 5, 4, 13, 14, 13),
  hatch: f('#fff', 'M2.500 2.500H15.500V15.500H2.500Z', K) + f('#6d9fce', 'M4 4H14V14H4Z') + s('#24619a', 'M4 5.500H14M4 7.500H14M4 9.500H14M4 11.500H14', 1, 'stroke-dasharray="1 1"'),
  gradient: f('#fff', 'M2.500 2.500H15.500V15.500H2.500Z', K) + f('#c9dbec', 'M4 4H14V7H4Z') + f('#9fbfdc', 'M4 7H14V10H4Z') + f('#5d90bf', 'M4 10H14V14H4Z'),
  region: s(K, 'M3.500 4.500H14.500V13.500H3.500Z') + o(K, 9, 9, 2.500), wipeout: s(K, 'M9 1.500L14 6.500H4ZM5 6.500L4 10.500H14L13 6.500M4 10.500L1.500 15.500H16.500L14 10.500', 1.1),
  table: f('#fff', 'M1.500 2.500H16.500V15.500H1.500Z', K) + f(B, 'M1 2H17V6H1Z') + s('#777', 'M1 9.500H17M1 12.500H17M6.500 6V15M11.500 6V15'),
  mtext: f('#fff', 'M1.500 2.500H16.500V15.500H1.500Z', K) + s(B, 'M4 9L6.500 4L9 9M5 7.500H8', 1.1) + s(K, 'M11 8.500H15M11 10.500H15M4 12.500H15'),
  erase: f('#fff', 'M2 13L12 2L16 6L7 16H4Z', K) + f('#4d84bb', 'M7 8L12 3L15 6L10 11Z'), copyobj: f('#fff', 'M1.500 1.500H6.500V6.500H1.500Z', K) + s(B, 'M9 3Q14 3 13 9M10 6L13 9L16 6', 2) + f('none', 'M9.500 11.500H16.500V16.500H9.500Z', P),
  mirror: f('#fff', 'M1.500 14.500L7.500 3V14.500Z', K) + f(P, 'M11 14.500V3L17 14.500Z') + s(K, 'M9.500 1V17', 1.3), offset: s(K, 'M1 15H15Q18 11 13 10Q14 2 9 2T5 9Q-1 10 1 15', 1.1) + s(P, 'M4 12.500H14M6 11Q6 5 9 6T12 11', 1.3),
  array: f(P, 'M2 2h6v6H2z') + f('#888090', 'M10 2h6v6h-6zM2 10h6v6H2zM10 10h6v6h-6z'), move: s(K, 'M9 2V16M2 9H16', 1.3) + f(K, 'M9 1L12 4H6ZM9 17L6 14H12ZM1 9L4 6V12ZM17 9L14 12V6Z'),
  rotate: s(K, 'M9 4Q3 4 3 9.500T9 15Q15 15 15 9', 1.3) + f('#111', 'M8 0L12 3L8 7Z'), scale: s(K, 'M9 14.500H2.500V2.500H15.500V9', 1.1) + q(P, 10, 11) + s(K, 'M10.500 10.500H15.500V15.500H10.500Z', 1, dash) + s(P, 'M11 11L14 14'),
  lengthen: s(K, 'M4 4L14 14', 1.3, 'stroke-dasharray="5 2"') + q(P, 3, 3, 15, 15), stretch: s(K, 'M2.500 16V7M15.500 7V16M2 15.500H16') + s(K, 'M2.500 7V2.500H15.500V7', 1, dash) + s(P, 'M9 14V7M6 9.500L9 6.500L12 9.500', 2),
  trim: s(K, 'M11 3L6 15M11 9.500H17', 1.2, 'stroke-dasharray="6 1"') + s(P, 'M1 9.500H7'), extend: s(K, 'M16 3L11 15', 1.2) + s(P, 'M1 9.500H5') + s(K, 'M6 9.500H13', 1, dash),
  breakpt: s(K, 'M7 3.500H2.500V15.500H15.500V3.500H11', 1.1) + q(B, 9, 4), break: s(K, 'M4 3.500H2.500V15.500H15.500V3.500H14', 1.1) + q(B, 6, 4, 12, 4), join: s(K, 'M2.500 17V7.500H5M15.500 17V7.500H12', 1.2) + f(G, 'M1 4H4V1L8 5L4 8V5H1ZM17 4H14V1L10 5L14 8V5H17Z'),
  chamfer: s(K, 'M2 15.500H15.500V3', 1.2) + s(P, 'M3 13L13 3', 1.3), fillet: s(K, 'M2.500 13V15.500H15.500V3H12', 1.1) + s(P, 'M2.500 13Q3 4 12 3', 1.3),
  explode: o('#3d72a5', 8, 10, 5, '#3d72a5') + s(B, 'M10 5Q11 0 15 4') + s('#f0ad18', 'M12 9H18M15 6V12M13 7L17 11M17 7L13 11', 1.2), attrib: s(B, 'M1.500 1.500H13.500V14.500H1.500ZM6.500 1V5M1 7.500H5M10 7.500H14M6.500 10V14M5.500 5.500H9.500V9.500H5.500Z') + s(B, 'M8 9L14 16', 3) + s(K, 'M11 12L17 6', 2),
  otrack: s(K, 'M4 9.500H15', 1.3) + q(O, 15, 9) + s(B, 'M1.500 8.500H3.500V10.500H1.500Z'), ofrom: s(K, 'M3.500 13V4.500H14', 1, dash) + q(O, 15, 4) + s(B, 'M1.500 14.500H3.500V16.500H1.500Z'),
  oend: s(K, 'M2.500 15.500L15.500 2.500', 1.1) + q(O, 2, 15, 15, 2), omid: s(K, 'M1 17L17 1', 1.1) + q(O, 9, 9), oint: s(K, 'M1 1L17 17M17 1L1 17', 1.1) + q(O, 9, 9), oapp: s(K, 'M1 1L17 17', 1.1) + s(K, 'M17 1L1 17', 1.1, 'stroke-dasharray="4 2"') + q(O, 9, 9),
  oext: s(K, 'M3 9.500H8') + s(B, 'M9 9.500H17', 1, 'stroke-dasharray="1 1"') + q(O, 3, 9), ocen: o(K, 9, 9, 7.500) + q(R, 9, 9), oquad: o(K, 9, 9, 7) + q(O, 8, 2, 8, 15, 2, 8, 15, 8), otan: o(K, 9, 9, 7) + s(K, 'M16.500 1V17', 1.3) + q(O, 15, 9),
  operp: s(K, 'M9.500 3V14M1 14.500H17', 1.1) + q(O, 9, 13), opar: s(K, 'M2 13L14 1M4 17L17 4', 1.2), oins: f('#fff', 'M2.500 1.500H11.500V4.500H16.500V16.500H6.500V12.500H2.500Z', K), onode: q(O, 5, 6),
  onear: s(K, 'M3 15L15 3', 1.1, 'stroke-dasharray="6 1"') + q(O, 9, 9) + q(B, 12, 12), onone: mag + s(O, 'M12 11L17 16M17 11L12 16', 1.4), osnap: mag,
  tleft: f('none', 'M11 5L7 9L11 13Z', '#000'), tright: f('none', 'M7 5L11 9L7 13Z', '#000'), tdown: f('#000', 'M5 9H13L9 13Z'), tclose: s('#000', 'M5.500 6L12 12.500M12 6L5.500 12.500', 1.6),
  pin: s('#000', 'M6.500 10V4.500H10.500V10M4 10.500H12M8.500 11V14M9.500 5V10', 1),
  sfirst: f('#000', 'M4 4h2v9H4zM12 4V13L7 8.500Z'), sprev: f('#000', 'M11 4V13L6 8.500Z'), snext: f('#000', 'M6 4V13L11 8.500Z'), slast: f('#000', 'M5 4V13L10 8.500ZM11 4h2v9h-2z'),
  quickadd: s('#000', 'M2 2.500H16M2 15.500H16M2.500 2V16M15.500 2V16', 1, 'stroke-dasharray="1 1"') + f('#a8d8e0', 'M4 4H14V14H4Z') + s('#0000e8', 'M9 5V13M5 9H13', 2.5),
  pick: s('#a02020', 'M1 1L6 6M6 1L1 6') + f('#fff', 'M5.500 5.500L15 9L12 11L15 14.500H7L5 10Z', '#000'), filter: f('#fff', 'M1 2.500H14L9 9V15H6V9Z', '#222') + f('#ffe818', 'M16 6L10 12H13L11 17L18 10H14Z', '#aa9800')
};

document.querySelectorAll('[data-tools]').forEach(bar => {
  bar.innerHTML = bar.dataset.tools.split(' ').map(n => n === '|'
    ? '<span class="sep"></span>'
    : `<button class="${n[0] === '^' ? 'drop' : ''}" aria-label="${n[0] === '^' ? 'more' : n}"><svg viewBox="0 0 18 18">${icons[n]}</svg></button>`).join('');
});
```
